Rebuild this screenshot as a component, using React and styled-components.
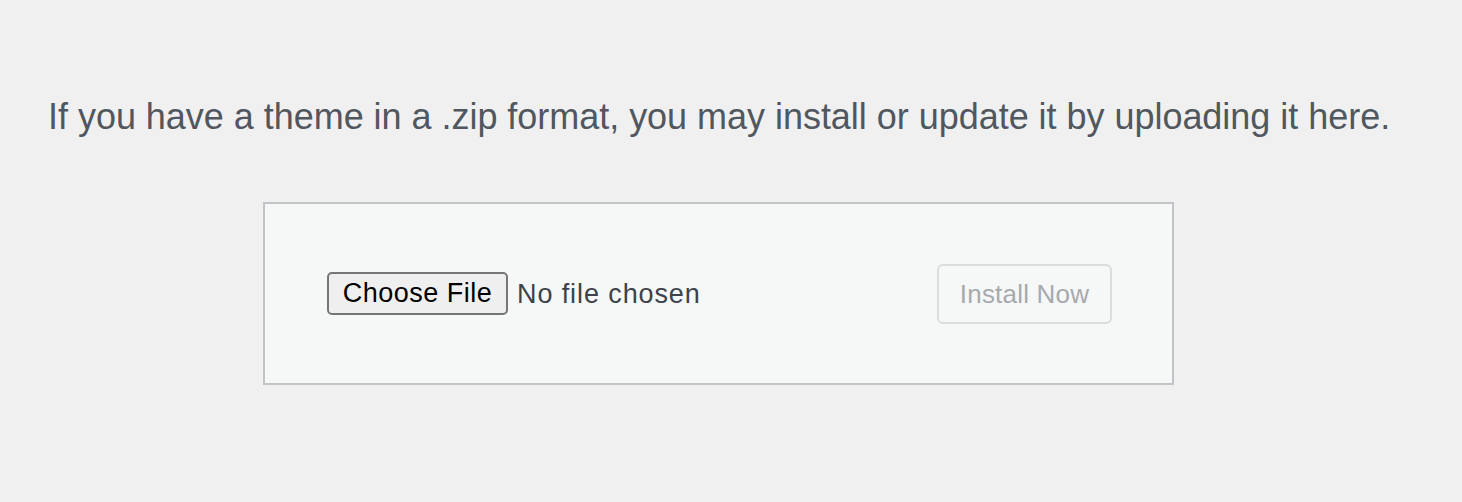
import React from "react";
import styled, { createGlobalStyle } from "styled-components";

const Global = createGlobalStyle`
  html, body { margin: 0; padding: 0; background: #f0f0f1; }
  body { font-family: "Liberation Sans", Arial, sans-serif; }
`;

const Page = styled.div`
  width: 1341px;
  padding: 92px 0 0 48px;
  text-align: center;
`;

const Help = styled.p`
  margin: 0;
  font-size: 36px;
  line-height: 50.4px;
  color: #50575e;
  text-align: left;
  white-space: nowrap;
  letter-spacing: -0.03px;
`;

const UploadForm = styled.form`
  box-sizing: border-box;
  width: 911px;
  height: 183px;
  margin: 60px auto 0;
  padding: 0 60px 0 62px;
  display: flex;
  align-items: center;
  justify-content: space-between;
  background: #f6f7f7;
  border: 2px solid #c3c4c7;
`;

const FileField = styled.div`
  display: flex;
  align-items: center;
  gap: 9px;
`;

const ChooseButton = styled.button`
  box-sizing: border-box;
  height: 43px;
  width: 181px;
  padding: 0;
  font-family: "Liberation Sans", Arial, sans-serif;
  font-size: 27px;
  letter-spacing: 0.5px;
  color: #000;
  background: #efefef;
  border: 2px solid #767676;
  border-radius: 5px;
`;

const FileStatus = styled.span`
  font-size: 27px;
  letter-spacing: 0.9px;
  color: #3c434a;
  padding-top: 1px;
`;

const InstallButton = styled.button`
  box-sizing: border-box;
  height: 60px;
  width: 175px;
  padding: 2px 20px 0;
  font-family: "Liberation Sans", Arial, sans-serif;
  font-size: 26px;
  letter-spacing: 0.2px;
  color: #a7aaad;
  background: #f6f7f7;
  border: 2px solid #dcdcde;
  border-radius: 6px;
`;

export default function App() {
  return (
    <>
      <Global />
      <Page>
        <Help>If you have a theme in a .zip format, you may install or update it by uploading it here.</Help>
        <UploadForm onSubmit={(e) => e.preventDefault()}>
          <FileField>
            <ChooseButton type="button">Choose File</ChooseButton>
            <FileStatus>No file chosen</FileStatus>
          </FileField>
          <InstallButton type="submit" disabled>Install Now</InstallButton>
        </UploadForm>
      </Page>
    </>
  );
}
